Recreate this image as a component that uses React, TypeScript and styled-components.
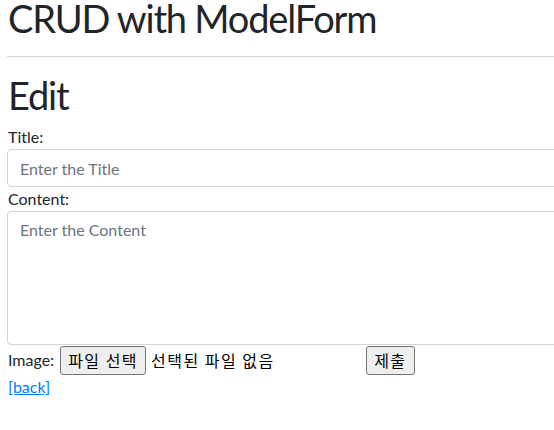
import React from "react";
import styled, { createGlobalStyle } from "styled-components";

const GlobalStyle = createGlobalStyle`
  html, body { overflow: hidden; }
  body {
    margin: 0;
    font-family: "Lato", "Noto Sans CJK KR", sans-serif;
    font-size: 16px;
    line-height: 24px;
    color: #212529;
    background: #fff;
  }
  * { box-sizing: border-box; }
`;

const Page = styled.div`
  width: 620px;
  padding-left: 7px;
`;

const Heading = styled.h1<{ $gapBelow?: number }>`
  margin: 0 0 ${(p) => p.$gapBelow ?? 0}px;
  font-size: 38px;
  line-height: 36px;
  font-weight: 400;
  letter-spacing: -1.2px;
  padding-left: 1px;
`;

const Rule = styled.hr`
  margin: 20px 0 20px;
  border: 0;
  border-top: 1px solid #d4d4d4;
`;

const Form = styled.form`
  display: flex;
  flex-direction: column;
`;

const Label = styled.label`
  display: block;
  padding-left: 1px;
`;

const fieldStyles = `
  display: block;
  width: 100%;
  padding: 6px 12px;
  border: 1px solid #ced4da;
  border-radius: 4px;
  font: inherit;
  color: #495057;
  background: #fff;
  &::placeholder { color: #6c757d; opacity: 1; }
`;

const TextInput = styled.input`
  ${fieldStyles}
  height: 38px;
`;

const TextArea = styled.textarea`
  ${fieldStyles}
  height: 134px;
  resize: none;
`;

const ImageRow = styled.div`
  display: flex;
  align-items: center;
  height: 30px;
  padding-left: 1px;
`;

const FileInput = styled.span`
  display: inline-flex;
  align-items: center;
  width: 306px;
  margin-left: 6px;
  font-family: "Noto Sans CJK KR", sans-serif;
  letter-spacing: 1.5px;
`;

const NativeButton = styled.button`
  height: 29px;
  padding: 0 7px;
  border: 1px solid #767676;
  border-radius: 3px;
  background: #efefef;
  color: #000;
  font-family: "Noto Sans CJK KR", sans-serif;
  font-size: 16px;
  line-height: 24px;
  letter-spacing: 1.5px;
`;

const FileStatus = styled.span`
  margin-left: 5px;
  color: #000;
`;

const BackLink = styled.a`
  display: block;
  padding-left: 1px;
  color: #007bff;
  text-decoration: underline;
`;

export default function App() {
  return (
    <>
      <GlobalStyle />
      <Page>
        <Heading>CRUD with ModelForm</Heading>
        <Rule />
        <Heading $gapBelow={12}>Edit</Heading>
        <Form>
          <Label htmlFor="title">Title:</Label>
          <TextInput id="title" placeholder="Enter the Title" />
          <Label htmlFor="content">Content:</Label>
          <TextArea id="content" placeholder="Enter the Content" />
          <ImageRow>
            <span>Image:</span>
            <FileInput>
              <NativeButton type="button">파일 선택</NativeButton>
              <FileStatus>선택된 파일 없음</FileStatus>
            </FileInput>
            <NativeButton type="button">제출</NativeButton>
          </ImageRow>
        </Form>
        <BackLink href="#">[back]</BackLink>
      </Page>
    </>
  );
}
